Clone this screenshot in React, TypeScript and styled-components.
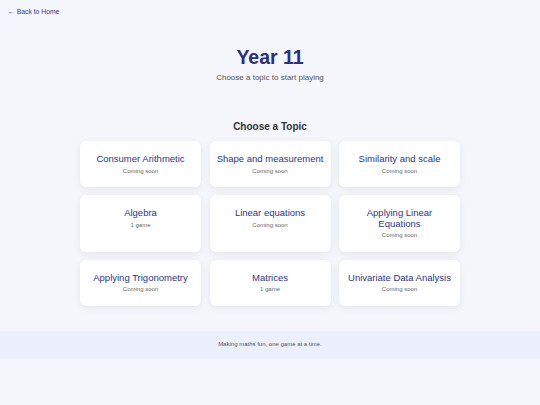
import React from 'react'
import styled, { createGlobalStyle } from 'styled-components'

const GlobalStyle = createGlobalStyle`
  html, body {
    margin: 0;
    padding: 0;
    background: #f5f6fb;
    font-family: 'Liberation Sans', Arial, sans-serif;
  }
  * {
    box-sizing: border-box;
  }
`

const Page = styled.div`
  min-height: 100vh;
  display: flex;
  flex-direction: column;
  background: #f5f6fb;
`

const TopBar = styled.nav`
  padding: 8px 8px 0;
  display: flex;
`

const BackLink = styled.a`
  display: block;
  font-size: 6.8px;
  line-height: 8px;
  color: #34398a;
  text-decoration: none;
`

const Hero = styled.header`
  display: flex;
  flex-direction: column;
  align-items: center;
  margin-top: 30px;
`

const Title = styled.h1`
  margin: 0;
  font-size: 19.5px;
  line-height: 23px;
  font-weight: 700;
  color: #2b2f7d;
`

const Subtitle = styled.p`
  margin: 4px 0 0;
  font-size: 8px;
  line-height: 10px;
  color: #555;
`

const Section = styled.section`
  width: 380px;
  margin: 38px auto 0;
  display: flex;
  flex-direction: column;
  align-items: center;
`

const SectionTitle = styled.h2`
  margin: 0;
  font-size: 10px;
  line-height: 12px;
  font-weight: 700;
  color: #333;
`

const Grid = styled.div`
  width: 100%;
  margin-top: 8px;
  display: grid;
  grid-template-columns: repeat(3, 1fr);
  gap: 8px 8.5px;
`

const Card = styled.a`
  background: #fff;
  border-radius: 6px;
  box-shadow: 0 2px 7px rgba(40, 45, 90, 0.08);
  padding: 13px 6px 12.5px;
  text-align: center;
  text-decoration: none;
  display: flex;
  flex-direction: column;
  align-items: center;
`

const CardTitle = styled.h3`
  margin: 0 0 3px;
  font-size: 9.5px;
  line-height: 10.5px;
  font-weight: 400;
  color: #2f3588;
`

const CardMeta = styled.span`
  font-size: 6px;
  line-height: 7px;
  color: #666;
`

const Footer = styled.footer`
  margin-top: 25px;
  padding: 10.5px 0;
  background: #eceffd;
  text-align: center;
  font-size: 6px;
  line-height: 7px;
  color: #555;
`

const topics = [
  { name: 'Consumer Arithmetic', meta: 'Coming soon' },
  { name: 'Shape and measurement', meta: 'Coming soon' },
  { name: 'Similarity and scale', meta: 'Coming soon' },
  { name: 'Algebra', meta: '1 game' },
  { name: 'Linear equations', meta: 'Coming soon' },
  { name: 'Applying Linear Equations', meta: 'Coming soon' },
  { name: 'Applying Trigonometry', meta: 'Coming soon' },
  { name: 'Matrices', meta: '1 game' },
  { name: 'Univariate Data Analysis', meta: 'Coming soon' },
]

const App = () => {
  return (
    <Page>
      <GlobalStyle />
      <TopBar>
        <BackLink href='#'>← Back to Home</BackLink>
      </TopBar>
      <Hero>
        <Title>Year 11</Title>
        <Subtitle>Choose a topic to start playing</Subtitle>
      </Hero>
      <Section>
        <SectionTitle>Choose a Topic</SectionTitle>
        <Grid>
          {topics.map((t) => (
            <Card key={t.name} href='#'>
              <CardTitle>{t.name}</CardTitle>
              <CardMeta>{t.meta}</CardMeta>
            </Card>
          ))}
        </Grid>
      </Section>
      <Footer>Making maths fun, one game at a time.</Footer>
    </Page>
  )
}

export default App
